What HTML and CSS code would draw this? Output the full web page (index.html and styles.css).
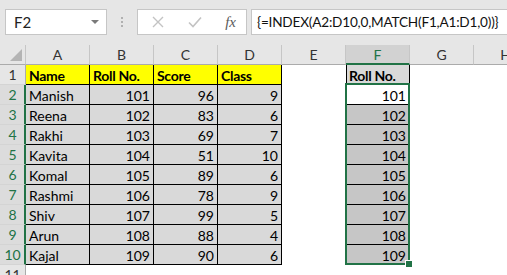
FILE: index.html
```html
<!DOCTYPE html>
<html lang="en">
<head>
    <meta charset="UTF-8">
    <title>INDEX MATCH</title>
    <link rel="stylesheet" href="styles.css">
</head>
<body>
    <div class="formula-bar">
        <div class="name-box">
            <span>F2</span>
            <svg class="drop" width="8" height="4" viewBox="0 0 8 4"><polygon points="0,0 8,0 4,4" fill="#7a7a7a"/></svg>
        </div>
        <div class="grip"><i></i><i></i><i></i></div>
        <div class="fx-buttons">
            <svg width="12" height="12" viewBox="0 0 12 12"><path d="M1 1 L11 11 M11 1 L1 11" stroke="#c3c3c3" stroke-width="1.4"/></svg>
            <svg width="14" height="12" viewBox="0 0 14 12"><path d="M1 6.5 L5 10.5 L13 1.5" stroke="#c3c3c3" stroke-width="1.6" fill="none"/></svg>
            <span class="fx">fx</span>
        </div>
        <div class="formula-input">{=INDEX(A2:D10,0,MATCH(F1,A1:D1,0))}</div>
    </div>

    <div class="sheet">
        <div class="grid" id="grid"></div>
        <div class="selection"><span class="handle"></span></div>
    </div>

    <script>
        const cols = ['A', 'B', 'C', 'D', 'E', 'F', 'G', 'H'];
        const head = ['Name', 'Roll No.', 'Score', 'Class'];
        const rows = [
            ['Manish', 101, 96, 9],
            ['Reena', 102, 83, 6],
            ['Rakhi', 103, 69, 7],
            ['Kavita', 104, 51, 10],
            ['Komal', 105, 89, 6],
            ['Rashmi', 106, 78, 9],
            ['Shiv', 107, 99, 5],
            ['Arun', 108, 88, 4],
            ['Kajal', 109, 90, 6]
        ];

        function cell(cls, text) {
            const d = document.createElement('div');
            d.className = cls;
            d.textContent = text === undefined ? '' : text;
            return d;
        }

        const grid = document.getElementById('grid');
        const corner = cell('corner');
        corner.innerHTML = '<svg width="26" height="19" viewBox="0 0 26 19"><polygon points="22,4 22,16 10,16" fill="#b4b4b4"/></svg>';
        grid.appendChild(corner);
        cols.forEach(c => grid.appendChild(cell(c === 'F' ? 'colhead active' : 'colhead', c)));

        for (let r = 1; r <= 11; r++) {
            const selected = r >= 2 && r <= 10;
            grid.appendChild(cell(selected ? 'rowhead active' : 'rowhead', r));
            cols.forEach((c, i) => {
                if (r === 1 && i < 4) {
                    grid.appendChild(cell('cell data title', head[i]));
                } else if (r >= 2 && r <= 10 && i < 4) {
                    const v = rows[r - 2][i];
                    grid.appendChild(cell(i === 0 ? 'cell data' : 'cell data num', v));
                } else if (c === 'F' && r === 1) {
                    grid.appendChild(cell('cell data title lookup', 'Roll No.'));
                } else if (c === 'F' && selected) {
                    grid.appendChild(cell(r === 2 ? 'cell data num current' : 'cell data num picked', rows[r - 2][1]));
                } else {
                    grid.appendChild(cell('cell'));
                }
            });
        }
    </script>
</body>
</html>
```

FILE: styles.css
```css
body {
    margin: 0;
    width: 507px;
    height: 275px;
    overflow: hidden;
    background-color: #fff;
    font-family: Lato, "Liberation Sans", sans-serif;
    font-size: 14px;
    color: #000;
}
.formula-bar {
    height: 45px;
    background-color: #e6e6e6;
    display: flex;
    align-items: flex-start;
    padding: 9px 0 0 5px;
    box-sizing: border-box;
    white-space: nowrap;
}
.name-box, .fx-buttons, .formula-input {
    height: 26px;
    box-sizing: border-box;
    background-color: #fff;
    border: 1px solid #c6c6c6;
    display: flex;
    align-items: center;
    flex-shrink: 0;
}
.name-box {
    width: 102px;
    padding: 0 7px 0 8px;
    justify-content: space-between;
    color: #222;
    font-size: 15px;
}
.grip {
    width: 30px;
    height: 26px;
    flex-shrink: 0;
    display: flex;
    flex-direction: column;
    align-items: center;
    justify-content: center;
    gap: 2px;
}
.grip i {
    width: 2px;
    height: 2px;
    background-color: #b0b0b0;
}
.fx-buttons {
    width: 110px;
    padding: 0 10px 0 14px;
    justify-content: space-between;
}
.fx {
    font-family: "Liberation Serif", serif;
    font-style: italic;
    font-size: 15px;
    color: #5a5a5a;
}
.formula-input {
    flex: 1 1 0;
    min-width: 0;
    overflow: hidden;
    margin-left: 4px;
    border-right: none;
    padding-left: 5px;
    font-size: 13.6px;
    letter-spacing: -0.2px;
    color: #111;
}
.sheet {
    position: relative;
}
.grid {
    display: grid;
    grid-template-columns: 26px repeat(8, 64px);
    grid-auto-rows: 20px;
}
.grid > div {
    box-sizing: border-box;
    line-height: 20px;
    white-space: nowrap;
    overflow: hidden;
}
.corner {
    background-color: #e6e6e6;
    border-bottom: 1px solid #ababab;
    border-right: 1px solid #c6c6c6;
}
.corner svg {
    display: block;
}
.colhead {
    background-color: #e6e6e6;
    border-right: 1px solid #c6c6c6;
    border-bottom: 1px solid #ababab;
    text-align: center;
    color: #333;
}
.colhead.active {
    background-color: #d2d2d2;
    color: #217346;
    border-bottom: 2px solid #217346;
}
.rowhead {
    background-color: #e6e6e6;
    border-right: 1px solid #ababab;
    border-bottom: 1px solid #d4d4d4;
    text-align: center;
    color: #333;
}
.rowhead.active {
    background-color: #dcdcdc;
    color: #217346;
    border-right: 2px solid #217346;
    padding-left: 1px;
}
.cell {
    padding: 1px 3px 0;
}
.data {
    background-color: #d9d9d9;
    border-right: 1px solid #000;
    border-bottom: 1px solid #000;
}
.title {
    background-color: #ffff00;
    font-weight: bold;
    letter-spacing: -0.3px;
}
.lookup {
    background-color: #d9d9d9;
    box-shadow: inset 1px 0 0 #000;
}
.num {
    text-align: right;
}
.current {
    background-color: #fff;
}
.picked {
    background-color: #c6c6c6;
}
.selection {
    position: absolute;
    left: 345px;
    top: 38px;
    width: 65px;
    height: 182px;
    box-sizing: border-box;
    border: 2px solid #217346;
}
.handle {
    position: absolute;
    right: -5px;
    bottom: -5px;
    width: 6px;
    height: 6px;
    background-color: #217346;
    border: 1px solid #fff;
}
```
